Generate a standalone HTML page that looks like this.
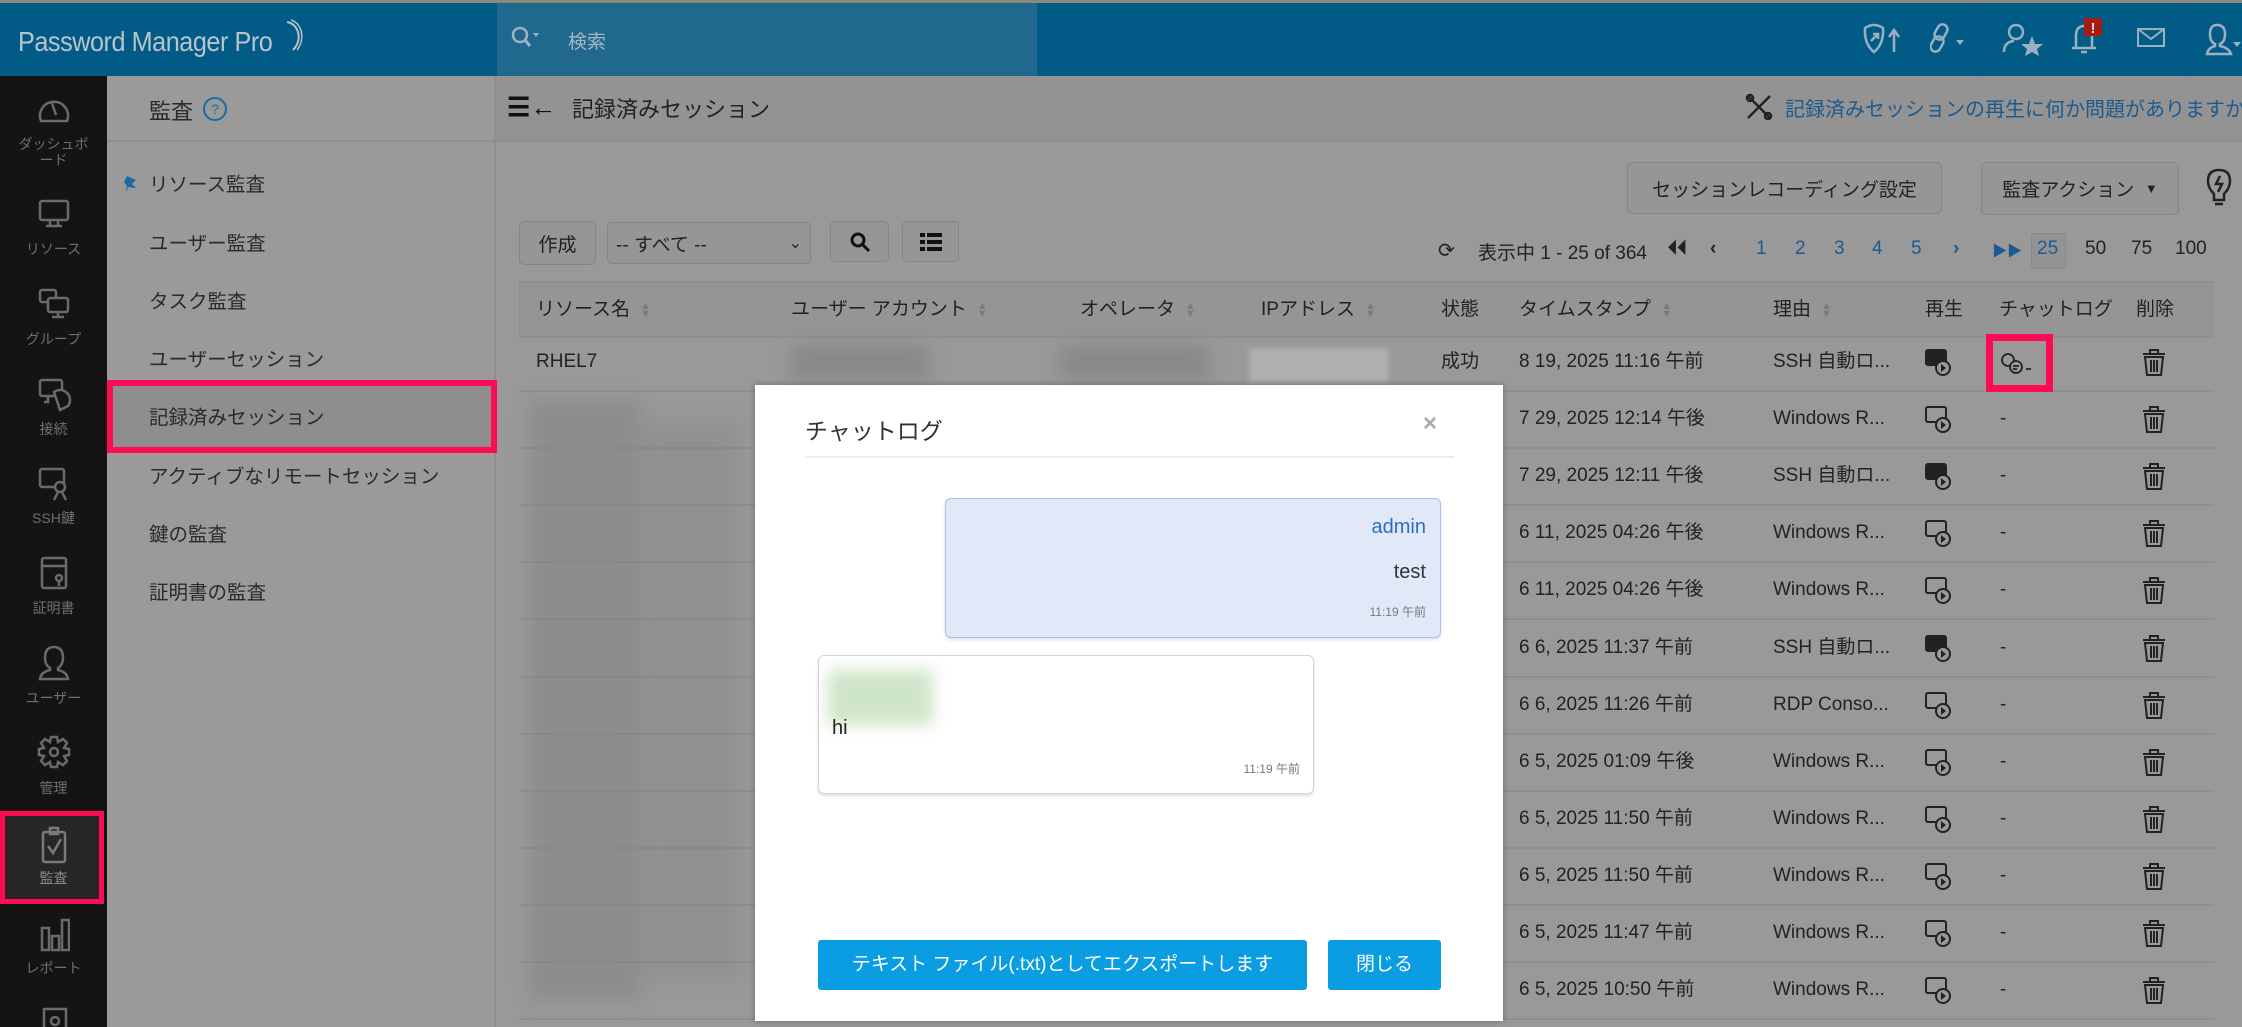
<!DOCTYPE html>
<html><head><meta charset="utf-8">
<style>
*{box-sizing:border-box;margin:0;padding:0}
body{width:2242px;height:1027px;overflow:hidden;background:#999;font-family:"Liberation Sans","Noto Sans CJK JP",sans-serif;color:#222;position:relative}
.a{position:absolute}
.top{left:0;top:0;width:2242px;height:76px;background:#025b86;border-top:3px solid #8a8a7a}
.logo{left:18px;top:26px;color:#b8c3cc;font-size:28px;letter-spacing:-0.5px;transform:scaleX(0.9);transform-origin:left}
.search{left:497px;top:3px;width:540px;height:73px;background:#21688e}
.side{left:0;top:76px;width:107px;height:951px;background:#141414}
.sl{width:107px;text-align:center;color:#6f6f6f;font-size:14px;line-height:16px}
.sub{left:107px;top:76px;width:389px;height:951px;background:#9a9a9a;border-right:2px solid #8f8f8f}
.nav{left:149px;font-size:19.5px;color:#2a2a2a}
.hdr{left:496px;top:76px;width:1746px;height:66px;background:#939393;border-bottom:2px solid #8d8d8d}
.btn{border:1.5px solid #858585;border-radius:5px;background:#969696;font-size:19px;color:#222;display:flex;align-items:center;justify-content:center}
.th{top:282px;height:56px;line-height:56px;font-size:19px;color:#222}
.td{font-size:19px;color:#222;line-height:20px}
.row{left:519px;width:1695px;height:2px;background:#8f8f8f}
.sort{display:inline-block;color:#7a7a7a;font-size:11px;line-height:8px;vertical-align:middle;margin-left:10px;width:10px;text-align:center}
.blur{background:#7e7e7e;filter:blur(9px);opacity:.6}
.pg{top:238px;font-size:19px;color:#1c5a8f}
.modal{left:755px;top:385px;width:748px;height:636px;background:#fff;box-shadow:0 0 6px rgba(0,0,0,.3)}
</style></head><body>
<div class="a top"></div>
<div class="a logo">Password Manager Pro</div>
<svg class="a" style="left:283px;top:18px" width="24" height="36"><path d="M4 4 C16 6 20 22 10 32" stroke="#b8c3cc" stroke-width="2" fill="none"/><path d="M8 2 C20 6 22 22 14 32" stroke="#b8c3cc" stroke-width="1.5" fill="none"/></svg>
<div class="a search"></div>
<svg class="a" style="left:510px;top:25px" width="32" height="26"><circle cx="10" cy="10" r="7" stroke="#9db3c2" stroke-width="2.5" fill="none"/><path d="M15 15 L20 21" stroke="#9db3c2" stroke-width="3"/><path d="M23 8 L29 8 L26 12Z" fill="#9db3c2"/></svg>
<div class="a" style="left:568px;top:27px;font-size:19px;color:#a4b7c5">検索</div>
<div class="a" style="left:1982px;top:3px;width:1px;height:73px;background:#0a5478"></div>
<div class="a" style="left:2188px;top:3px;width:1px;height:73px;background:#0a5478"></div>
<svg class="a" style="left:1862px;top:22px" width="40" height="34" fill="none" stroke="#9ab0bf" stroke-width="2.5"><path d="M3 6 Q12 0 21 6 Q22 22 12 30 Q2 22 3 6Z"/><path d="M9 19 L16 12 M11 12 L16 12 L16 17"/><path d="M32 30 L32 10 M27 15 L32 8 L37 15"/></svg>
<svg class="a" style="left:1930px;top:22px" width="38" height="34" fill="none" stroke="#9ab0bf" stroke-width="2.5"><rect x="6" y="2" width="10" height="16" rx="5" transform="rotate(30 11 10)"/><rect x="2" y="14" width="10" height="16" rx="5" transform="rotate(30 7 22)"/><path d="M26 18 L34 18 L30 23Z" fill="#9ab0bf" stroke="none"/></svg>
<svg class="a" style="left:2002px;top:22px" width="42" height="34" fill="none" stroke="#9ab0bf" stroke-width="2.5"><circle cx="14" cy="10" r="7"/><path d="M2 30 Q2 20 12 19"/><path d="M30 14 L33 22 L41 22 L35 27 L37 34 L30 30 L23 34 L25 27 L19 22 L27 22Z" fill="#9ab0bf" stroke="none"/></svg>
<svg class="a" style="left:2070px;top:18px" width="40" height="38" fill="none" stroke="#9ab0bf" stroke-width="2.5"><path d="M6 30 L6 18 Q6 8 14 8 Q22 8 22 18 L22 30 Z M2 30 L26 30 M11 34 L17 34"/><rect x="14" y="0" width="18" height="18" fill="#a51b12" stroke="none"/><text x="23" y="15" fill="#ddd" font-size="15" font-weight="bold" text-anchor="middle" stroke="none" font-family="Liberation Sans">!</text></svg>
<svg class="a" style="left:2137px;top:28px" width="28" height="20" fill="none" stroke="#9ab0bf" stroke-width="2"><rect x="1" y="1" width="26" height="17"/><path d="M1 1 L14 11 L27 1"/></svg>
<svg class="a" style="left:2205px;top:22px" width="37" height="34" fill="none" stroke="#9ab0bf" stroke-width="2.5"><path d="M12 3 Q20 3 20 12 Q20 20 15 22 L15 24 Q24 26 26 32 L2 32 Q3 26 10 24 L10 22 Q5 20 5 12 Q5 3 12 3Z"/><path d="M28 20 L36 20 L32 25Z" fill="#9ab0bf" stroke="none"/></svg>

<div class="a side"></div>
<svg class="a" style="left:38px;top:95px" width="32" height="30" fill="none" stroke="#6a6a6a" stroke-width="2.5"><path d="M3 26 A14 14 0 1 1 29 26 Z"/><path d="M14 8 L18 20"/></svg>
<div class="a sl" style="left:0;top:136px">ダッシュボ<br>ード</div>
<svg class="a" style="left:38px;top:199px" width="32" height="30" fill="none" stroke="#6a6a6a" stroke-width="2.5"><rect x="2" y="2" width="28" height="19" rx="2"/><path d="M12 21 L12 27 M20 21 L20 27 M8 27 L24 27"/></svg>
<div class="a sl" style="left:0;top:241px">リソース</div>
<svg class="a" style="left:38px;top:288px" width="32" height="32" fill="none" stroke="#6a6a6a" stroke-width="2.5"><rect x="2" y="2" width="16" height="12" rx="2"/><rect x="10" y="10" width="20" height="14" rx="2" fill="#141414"/><path d="M20 24 L20 29 M14 29 L26 29"/></svg>
<div class="a sl" style="left:0;top:331px">グループ</div>
<svg class="a" style="left:38px;top:378px" width="34" height="34" fill="none" stroke="#6a6a6a" stroke-width="2.5"><rect x="2" y="2" width="22" height="16" rx="2"/><path d="M10 18 L10 24 L6 24"/><path d="M16 14 A10 10 0 0 1 30 28 L22 32 Z" fill="#141414"/></svg>
<div class="a sl" style="left:0;top:421px">接続</div>
<svg class="a" style="left:38px;top:467px" width="34" height="34" fill="none" stroke="#6a6a6a" stroke-width="2.5"><rect x="2" y="2" width="24" height="18" rx="2"/><circle cx="22" cy="20" r="5" fill="#141414"/><path d="M20 25 L16 33 M24 25 L28 33"/></svg>
<div class="a sl" style="left:0;top:510px">SSH鍵</div>
<svg class="a" style="left:40px;top:556px" width="30" height="36" fill="none" stroke="#6a6a6a" stroke-width="2.5"><rect x="2" y="2" width="24" height="30" rx="2"/><path d="M2 10 L26 10"/><circle cx="19" cy="22" r="3"/><path d="M19 25 L19 30"/></svg>
<div class="a sl" style="left:0;top:600px">証明書</div>
<svg class="a" style="left:38px;top:645px" width="32" height="36" fill="none" stroke="#6a6a6a" stroke-width="2.5"><path d="M16 2 Q25 2 25 13 Q25 20 20 23 L20 25 Q29 27 30 34 L2 34 Q3 27 12 25 L12 23 Q7 20 7 13 Q7 2 16 2Z"/></svg>
<div class="a sl" style="left:0;top:690px">ユーザー</div>
<svg class="a" style="left:37px;top:735px" width="34" height="34" fill="none" stroke="#6a6a6a" stroke-width="2.5"><circle cx="17" cy="17" r="4"/><path d="M14 2 L20 2 L21 7 L26 4 L30 8 L27 13 L32 14 L32 20 L27 21 L30 26 L26 30 L21 27 L20 32 L14 32 L13 27 L8 30 L4 26 L7 21 L2 20 L2 14 L7 13 L4 8 L8 4 L13 7Z"/></svg>
<div class="a sl" style="left:0;top:780px">管理</div>
<div class="a" style="left:0;top:811px;width:104px;height:93px;border:5px solid #ff0a54;background:#272727"></div>
<svg class="a" style="left:40px;top:826px" width="28" height="38" fill="none" stroke="#7a7a7a" stroke-width="2.5"><rect x="3" y="6" width="22" height="30" rx="2"/><rect x="10" y="2" width="8" height="6"/><path d="M8 20 L13 27 L21 13"/></svg>
<div class="a sl" style="left:0;top:870px;color:#8a8a8a">監査</div>
<svg class="a" style="left:40px;top:918px" width="30" height="34" fill="none" stroke="#6a6a6a" stroke-width="2.5"><rect x="2" y="10" width="7" height="22"/><rect x="12" y="18" width="7" height="14"/><rect x="22" y="2" width="7" height="30"/></svg>
<div class="a sl" style="left:0;top:960px">レポート</div>
<svg class="a" style="left:40px;top:1007px" width="30" height="20" fill="none" stroke="#6a6a6a" stroke-width="2.5"><rect x="4" y="2" width="22" height="30"/><circle cx="15" cy="14" r="4"/></svg>

<div class="a sub"></div>
<div class="a" style="left:107px;top:140px;width:389px;height:2px;background:#8f8f8f"></div>
<div class="a nav" style="top:94px;font-size:22px">監査</div>
<div class="a" style="left:203px;top:97px;width:24px;height:24px;border:2px solid #1b6aa4;border-radius:50%;color:#1b6aa4;font-size:14px;text-align:center;line-height:20px">?</div>
<svg class="a" style="left:124px;top:174px" width="16" height="22"><path d="M3 2 L12 6 L8 10 L12 14 L4 13 L2 20 L3 12 L0 8Z" fill="#1b6aa4"/></svg>
<div class="a nav" style="top:168px">リソース監査</div>
<div class="a nav" style="top:227px">ユーザー監査</div>
<div class="a nav" style="top:285px">タスク監査</div>
<div class="a nav" style="top:343px">ユーザーセッション</div>
<div class="a" style="left:107px;top:380px;width:390px;height:73px;border:6px solid #ff0a54;background:#8e8e8e"></div>
<div class="a nav" style="top:401px">記録済みセッション</div>
<div class="a nav" style="top:460px">アクティブなリモートセッション</div>
<div class="a nav" style="top:518px">鍵の監査</div>
<div class="a nav" style="top:576px">証明書の監査</div>

<div class="a hdr"></div>
<div class="a" style="left:507px;top:92px;font-size:26px;color:#111;font-weight:bold">☰←</div>
<div class="a" style="left:572px;top:92px;font-size:22px;color:#222">記録済みセッション</div>
<svg class="a" style="left:1745px;top:93px" width="30" height="28" fill="none" stroke="#222" stroke-width="2.5"><path d="M3 3 L25 25 M25 3 L3 25"/><circle cx="5" cy="5" r="3"/><circle cx="23" cy="23" r="3"/></svg>
<div class="a" style="left:1785px;top:93px;font-size:20px;color:#1c5a8f;white-space:nowrap">記録済みセッションの再生に何か問題がありますか?</div>

<div class="a btn" style="left:1627px;top:162px;width:315px;height:52px">セッションレコーディング設定</div>
<div class="a btn" style="left:1981px;top:162px;width:198px;height:53px">監査アクション &nbsp;<span style="font-size:13px">▼</span></div>
<svg class="a" style="left:2206px;top:168px" width="26" height="40" fill="none" stroke="#222" stroke-width="2.5"><path d="M13 2 Q24 2 24 13 Q24 20 18 26 L18 32 L8 32 L8 26 Q2 20 2 13 Q2 2 13 2Z"/><path d="M14 8 L10 16 L16 16 L12 24"/><path d="M9 36 L17 36"/></svg>

<div class="a btn" style="left:519px;top:221px;width:77px;height:44px">作成</div>
<div class="a btn" style="left:607px;top:222px;width:204px;height:42px;justify-content:space-between;padding:0 8px">-- すべて --<span style="font-size:16px">⌄</span></div>
<div class="a btn" style="left:830px;top:221px;width:59px;height:41px"><svg width="22" height="22" fill="none" stroke="#111" stroke-width="3"><circle cx="9" cy="9" r="6"/><path d="M13 13 L20 20"/></svg></div>
<div class="a btn" style="left:902px;top:221px;width:57px;height:41px"><svg width="22" height="18" fill="#111"><rect x="0" y="0" width="5" height="4"/><rect x="7" y="0" width="15" height="4"/><rect x="0" y="7" width="5" height="4"/><rect x="7" y="7" width="15" height="4"/><rect x="0" y="14" width="5" height="4"/><rect x="7" y="14" width="15" height="4"/></svg></div>

<div class="a" style="left:1438px;top:238px;font-size:20px;color:#222">⟳</div>
<div class="a" style="left:1478px;top:238px;font-size:19px;color:#222">表示中 1 - 25 of 364</div>
<div class="a pg" style="left:1668px;color:#222;font-weight:bold">⏴⏴</div>
<div class="a pg" style="left:1710px;color:#222;font-weight:bold">‹</div>
<div class="a pg" style="left:1756px">1</div>
<div class="a pg" style="left:1795px">2</div>
<div class="a pg" style="left:1834px">3</div>
<div class="a pg" style="left:1872px">4</div>
<div class="a pg" style="left:1911px">5</div>
<div class="a pg" style="left:1953px;font-weight:bold">›</div>
<div class="a pg" style="left:1992px;font-size:15px;top:240px">▶▶</div>
<div class="a" style="left:2031px;top:233px;width:35px;height:36px;border:1px solid #8a8a8a;border-radius:3px;background:#939393"></div>
<div class="a pg" style="left:2037px">25</div>
<div class="a pg" style="left:2085px;color:#222">50</div>
<div class="a pg" style="left:2131px;color:#222">75</div>
<div class="a pg" style="left:2175px;color:#222">100</div>

<div class="a" style="left:519px;top:281px;width:1695px;height:57px;background:#959595;border-top:2px solid #8f8f8f;border-bottom:2px solid #8f8f8f;border-left:1px solid #8f8f8f"></div>
<div class="a th" style="left:536px">リソース名<span class="sort">▲<br>▼</span></div>
<div class="a th" style="left:791px">ユーザー アカウント<span class="sort">▲<br>▼</span></div>
<div class="a th" style="left:1080px">オペレータ<span class="sort">▲<br>▼</span></div>
<div class="a th" style="left:1261px">IPアドレス<span class="sort">▲<br>▼</span></div>
<div class="a th" style="left:1441px">状態</div>
<div class="a th" style="left:1519px">タイムスタンプ<span class="sort">▲<br>▼</span></div>
<div class="a th" style="left:1773px">理由<span class="sort">▲<br>▼</span></div>
<div class="a th" style="left:1925px">再生</div>
<div class="a th" style="left:1999px">チャットログ</div>
<div class="a th" style="left:2136px">削除</div>

<div id="rows"></div>
<div class="a td" style="left:536px;top:352px">RHEL7</div>
<div class="a blur" style="left:790px;top:345px;width:140px;height:35px"></div>
<div class="a blur" style="left:1060px;top:345px;width:150px;height:35px"></div>
<div class="a" style="left:1249px;top:348px;width:140px;height:34px;background:#b0b0b0;filter:blur(3px)"></div>
<div class="a td" style="left:1441px;top:352px">成功</div>
<div class="a blur" style="left:530px;top:400px;width:110px;height:600px;opacity:.45"></div>
<div class="a blur" style="left:640px;top:420px;width:100px;height:560px;opacity:.3"></div>

<script>
var d=[["8 19, 2025 11:16 午前","SSH 自動ロ...",1],["7 29, 2025 12:14 午後","Windows R...",0],["7 29, 2025 12:11 午後","SSH 自動ロ...",1],["6 11, 2025 04:26 午後","Windows R...",0],["6 11, 2025 04:26 午後","Windows R...",0],["6 6, 2025 11:37 午前","SSH 自動ロ...",1],["6 6, 2025 11:26 午前","RDP Conso...",0],["6 5, 2025 01:09 午後","Windows R...",0],["6 5, 2025 11:50 午前","Windows R...",0],["6 5, 2025 11:50 午前","Windows R...",0],["6 5, 2025 11:47 午前","Windows R...",0],["6 5, 2025 10:50 午前","Windows R...",0]];
var h="";
for(var i=0;i<d.length;i++){var c=362+i*57.1;var t=Math.round(c-10);
h+='<div class="a row" style="top:'+Math.round(c+28)+'px"></div>';
h+='<div class="a td" style="left:1519px;top:'+t+'px">'+d[i][0]+'</div>';
h+='<div class="a td" style="left:1773px;top:'+t+'px">'+d[i][1]+'</div>';
h+='<svg class="a" style="left:1924px;top:'+Math.round(c-14)+'px" width="30" height="30" fill="none" stroke="#222" stroke-width="2"><rect x="2" y="2" width="20" height="15" rx="2" '+(d[i][2]?'fill="#222"':'')+'/><circle cx="19" cy="20" r="7" fill="#999"/><path d="M17 16 L22 20 L17 24Z" fill="#222" stroke="none"/></svg>';
if(i>0)h+='<div class="a td" style="left:2000px;top:'+t+'px">-</div>';
h+='<svg class="a" style="left:2141px;top:'+Math.round(c-14)+'px" width="26" height="28" fill="none" stroke="#222" stroke-width="2"><path d="M2 6 L24 6 M9 6 L9 2 L17 2 L17 6"/><path d="M4 9 L22 9 L20 27 L6 27Z"/><path d="M10 12 L10 24 M13 12 L13 24 M16 12 L16 24"/></svg>';}
document.getElementById("rows").innerHTML=h;
</script>
<div class="a" style="left:1986px;top:334px;width:67px;height:58px;border:7px solid #ff0a54"></div>
<svg class="a" style="left:2000px;top:352px" width="36" height="26" fill="none" stroke="#222" stroke-width="1.8"><circle cx="8" cy="8" r="6"/><circle cx="16" cy="15" r="6" fill="#999"/><path d="M13 14 L19 14 M13 17 L17 17 M26 17 L31 17"/></svg>

<div class="a modal"></div>
<div class="a" style="left:805px;top:412px;font-size:23px;color:#333">チャットログ</div>
<div class="a" style="left:1423px;top:410px;font-size:24px;color:#aaa;font-weight:bold">×</div>
<div class="a" style="left:805px;top:456px;width:649px;height:2px;background:#ececec"></div>
<div class="a" style="left:945px;top:498px;width:496px;height:140px;background:#e1e9f9;border:1px solid #a9c1ea;border-radius:6px;box-shadow:0 2px 3px rgba(0,0,0,.12)"></div>
<div class="a" style="left:1300px;top:516px;width:126px;text-align:right;font-size:20px;color:#2e6dc4">admin</div>
<div class="a" style="left:1300px;top:561px;width:126px;text-align:right;font-size:20px;color:#333">test</div>
<div class="a" style="left:1300px;top:603px;width:126px;text-align:right;font-size:12px;color:#777">11:19 午前</div>
<div class="a" style="left:818px;top:655px;width:496px;height:139px;background:#fff;border:1px solid #d5d5d5;border-radius:6px;box-shadow:0 2px 3px rgba(0,0,0,.12)"></div>
<div class="a" style="left:828px;top:670px;width:105px;height:55px;background:#cfe5c8;filter:blur(8px)"></div>
<div class="a" style="left:832px;top:717px;font-size:20px;color:#222">hi</div>
<div class="a" style="left:1170px;top:760px;width:130px;text-align:right;font-size:12px;color:#777">11:19 午前</div>
<div class="a" style="left:818px;top:940px;width:489px;height:50px;background:#0a9de2;border-radius:3px;color:#fff;font-size:19px;text-align:center;line-height:50px">テキスト ファイル(.txt)としてエクスポートします</div>
<div class="a" style="left:1328px;top:940px;width:113px;height:50px;background:#0a9de2;border-radius:3px;color:#fff;font-size:19px;text-align:center;line-height:50px">閉じる</div>
</body></html>
